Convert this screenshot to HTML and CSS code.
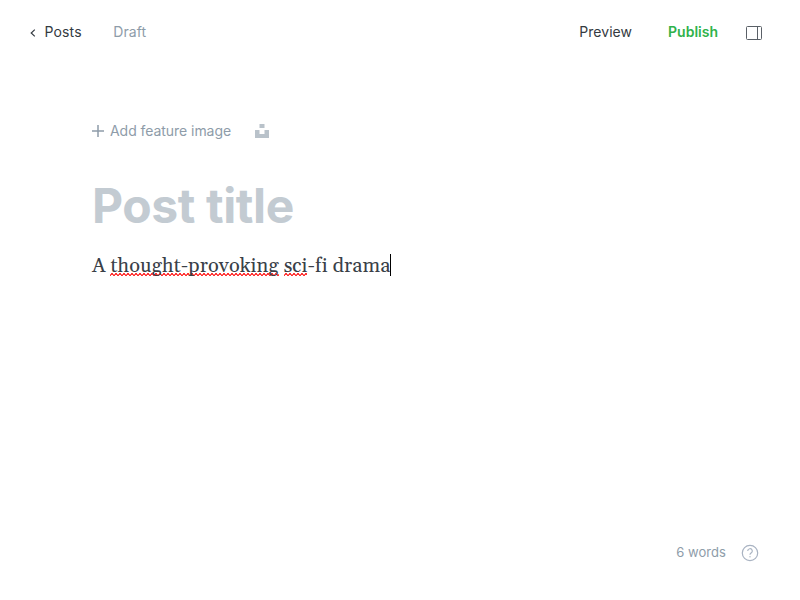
FILE: index.html
```html
<!DOCTYPE html>
<html lang="en">
<head>
<meta charset="utf-8">
<title>Editor</title>
<link rel="stylesheet" href="styles.css">
</head>
<body>
<div class="editor">
  <header class="topbar">
    <a class="back"><svg class="chevron" width="6" height="8" viewBox="0 0 6 8"><path d="M4.800 .6 1.200 4l3.600 3.400"/></svg><span class="back-label">Posts</span></a>
    <span class="status">Draft</span>
    <nav class="actions">
      <a class="preview">Preview</a>
      <a class="publish">Publish</a>
      <svg class="sidebar-icon" width="16" height="16" viewBox="0 0 16 16"><rect x=".5" y="1.500" width="15" height="13" rx="1"/><path d="M11.500 1.500v13"/></svg>
    </nav>
  </header>
  <main class="content">
    <div class="feature">
      <svg class="plus" width="12" height="12" viewBox="0 0 12 12"><path d="M6 0v12M0 6h12"/></svg>
      <span class="feature-label">Add feature image</span>
      <svg class="unsplash" width="14" height="14" viewBox="0 0 14 14"><path d="M4.500 0h5v4h-5zM0 6h4.500v4h5V6H14v8H0z"/></svg>
    </div>
    <h1 class="title">Post title</h1>
    <p class="body">A <span class="misspelled">thought-provoking</span> <span class="misspelled">sci</span>-fi drama<span class="caret"></span></p>
  </main>
  <footer class="footer">
    <span class="words">6 words</span>
    <svg class="help" width="18" height="18" viewBox="0 0 18 18"><circle cx="9" cy="9" r="7.700"/><path d="M6.700 7a2.300 2.300 0 1 1 3.300 2.100c-.7.400-1 .8-1 1.600"/><circle class="dot" cx="9" cy="12.700" r=".7"/></svg>
  </footer>
</div>
</body>
</html>
```
FILE: styles.css
```css
* { box-sizing: border-box; }
body { margin: 0; background: #fff; font-family: Inter, sans-serif; font-size: 14px; color: #394047; }
svg { display: block; flex: none; fill: none; stroke: currentColor; }
.editor { height: 600px; display: flex; flex-direction: column; }
.topbar { height: 64px; display: flex; align-items: center; padding: 0 38px 0 30px; }
.back { display: flex; align-items: center; gap: 8.5px; color: #343a41; letter-spacing: .15px; }
.back-label, .status, .preview, .publish { margin-bottom: 1px; }
.chevron { margin-top: 2px; stroke-width: 1.2; }
.status { margin-left: 31.5px; color: #8e9ca9; letter-spacing: .1px; }
.actions { margin-left: auto; display: flex; align-items: center; }
.preview { color: #343a41; letter-spacing: .05px; }
.publish { margin-left: 36px; color: #30b24a; font-weight: 600; }
.sidebar-icon { margin: 2px 0 0 28px; color: #5a6067; }
.content { flex: 1; padding: 57px 92px 0; }
.feature { display: flex; align-items: center; height: 20px; color: #8e9ca9; }
.plus { stroke-width: 1.5; }
.feature-label { margin: 0 0 1px 6px; letter-spacing: -.05px; }
.unsplash { margin-left: 24px; fill: #b9c2ca; stroke: none; }
.title { margin: 37px 0 0; font-size: 48px; line-height: 56px; font-weight: 700; letter-spacing: -0.4px; color: #c3cbd2; }
.body { margin: 16px 0 0; font: 20px/32px Gelasio, Georgia, "Liberation Serif", serif; letter-spacing: .09px; white-space: nowrap; }
/* Zigzag of 4px repeats: crest, flank and trough rows */
.misspelled {
  background:
    linear-gradient(90deg, transparent 1px, #f33 1px 3px, transparent 3px) 0 calc(100% - 5px) / 4px 1px repeat-x,
    linear-gradient(90deg, #f66 1px, #f33 1px 3px, #f66 3px) 0 calc(100% - 4px) / 4px 1px repeat-x,
    linear-gradient(90deg, #f33 1px, transparent 1px 3px, #f33 3px) 0 calc(100% - 3px) / 4px 1px repeat-x;
}
.caret { display: inline-block; width: 1px; height: 22px; background: #000; vertical-align: -4px; }
.footer { height: 48px; margin-bottom: 24px; display: flex; align-items: center; justify-content: flex-end; padding-right: 41px; color: #8e9ca9; font-size: 13px; gap: 15px; }
.help { margin-top: 2px; color: #a9b3c2; stroke-width: 1.2; }
.words { letter-spacing: .05px; }
.dot { fill: currentColor; stroke: none; }
```
